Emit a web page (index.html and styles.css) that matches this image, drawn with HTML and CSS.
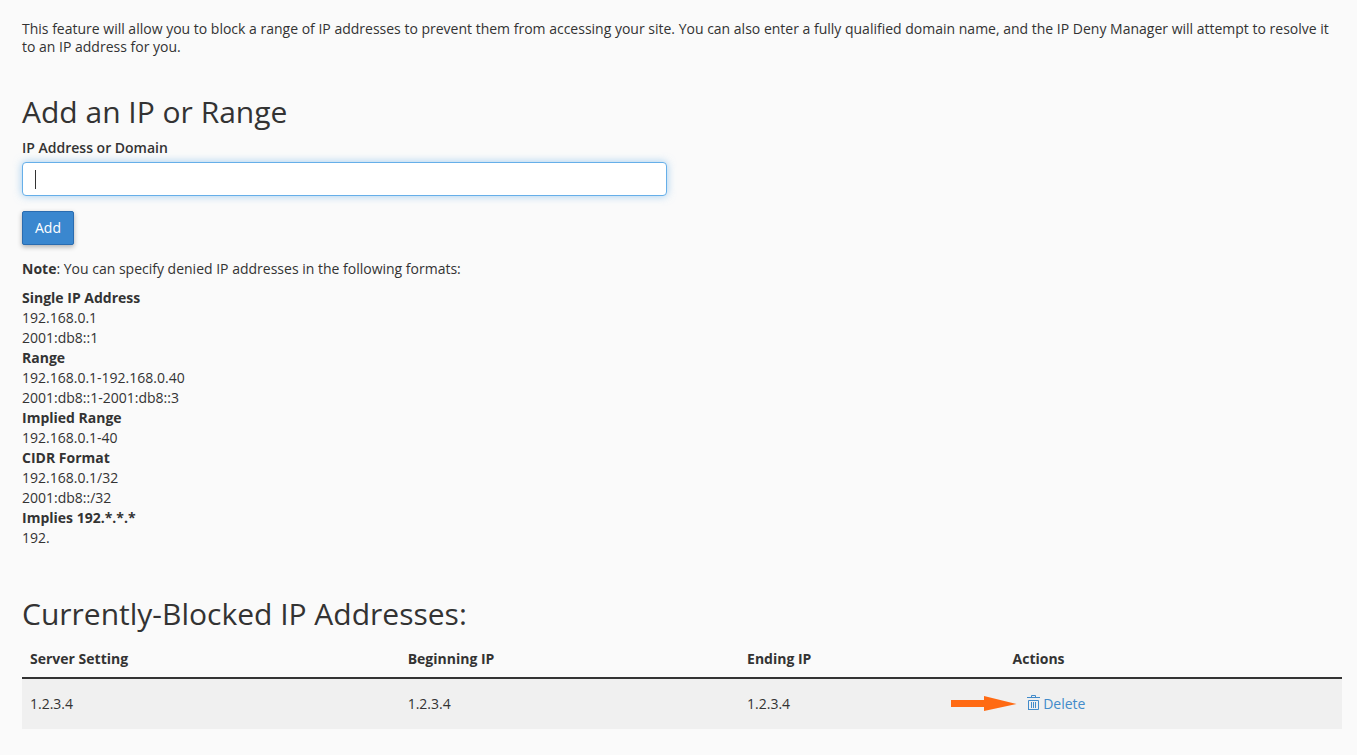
FILE: index.html
```html
<!DOCTYPE html>
<html lang="en">
<head>
    <meta charset="UTF-8">
    <meta name="viewport" content="width=device-width, initial-scale=1.0">
    <title>IP Blocker</title>
    <link rel="stylesheet" href="styles.css">
</head>
<body>

    <p class="description">This feature will allow you to block a range of IP addresses to prevent them from accessing your site. You can also enter a fully qualified domain name, and the IP Deny Manager will attempt to resolve it to an IP address for you.</p>

    <section class="section">
        <h2>Add an IP or Range</h2>
        <form id="addForm">
            <label for="ip">IP Address or Domain</label>
            <input type="text" id="ip" class="ip-input" autofocus>
            <button type="submit" class="add-btn">Add</button>
        </form>
        <p class="note"><strong>Note</strong>: You can specify denied IP addresses in the following formats:</p>
        <dl class="formats">
            <dt>Single IP Address</dt>
            <dd>192.168.0.1</dd>
            <dd>2001:db8::1</dd>
            <dt>Range</dt>
            <dd>192.168.0.1-192.168.0.40</dd>
            <dd>2001:db8::1-2001:db8::3</dd>
            <dt>Implied Range</dt>
            <dd>192.168.0.1-40</dd>
            <dt>CIDR Format</dt>
            <dd>192.168.0.1/32</dd>
            <dd>2001:db8::/32</dd>
            <dt>Implies 192.*.*.*</dt>
            <dd>192.</dd>
        </dl>
    </section>

    <section class="section">
        <h2>Currently-Blocked IP Addresses:</h2>
        <table class="blocked">
            <thead>
                <tr>
                    <th class="col-server">Server Setting</th>
                    <th class="col-begin">Beginning IP</th>
                    <th class="col-end">Ending IP</th>
                    <th class="col-actions">Actions</th>
                </tr>
            </thead>
            <tbody>
                <tr>
                    <td>1.2.3.4</td>
                    <td>1.2.3.4</td>
                    <td>1.2.3.4</td>
                    <td class="actions">
                        <svg class="arrow" width="66" height="16" viewBox="0 0 66 16" aria-hidden="true">
                            <path d="M0 4H33V0L65.500 8L33 15V11H0Z" fill="#ff6a13"/>
                        </svg>
                        <a href="#" class="delete">
                            <svg width="13" height="16" viewBox="0 0 13 16" fill="none" stroke="currentColor" aria-hidden="true">
                                <path d="M0 2.500H13M4.500 2V0.500H8.500V2M1.500 15V5.500H11.500V14.500H1.500M4.500 7V13M6.500 7V13M8.500 7V13"/>
                            </svg>
                            Delete</a>
                    </td>
                </tr>
            </tbody>
        </table>
    </section>

</body>
</html>
```
FILE: styles.css
```css
body {
    font-family: "Open Sans", sans-serif;
    font-size: 14px;
    line-height: 18px;
    color: #333;
    background-color: #fafafa;
    margin: 0;
    padding: 20px 15px 26px 22px;
}
p {
    margin: 0;
}
.section {
    margin-top: 39px;
}
h2 {
    font-size: 30px;
    font-weight: 400;
    line-height: 33px;
    margin: 0 0 11px;
}
label {
    display: block;
    font-weight: 600;
    margin-bottom: 5px;
}
.ip-input {
    display: block;
    box-sizing: border-box;
    width: calc(50% - 15px);
    height: 34px;
    padding: 6px 12px;
    font: inherit;
    background-color: white;
    border: 1px solid #66afe9;
    border-radius: 4px;
    outline: none;
    box-shadow: 0 0 8px rgba(102, 175, 233, 0.6);
}
.ip-input:placeholder-shown,
.ip-input:focus {
    caret-color: transparent;
    background: white linear-gradient(#333, #333) no-repeat 12px center / 1px 19px;
}
.add-btn {
    display: block;
    height: 34px;
    margin: 15px 0;
    padding: 6px 12px;
    font: inherit;
    font-weight: 500;
    color: white;
    background-color: #3a87cf;
    border: 1px solid #2a6cb0;
    border-radius: 2px;
    box-shadow: 0 2px 5px rgba(0, 0, 0, 0.3);
    cursor: pointer;
}
.formats {
    line-height: 20px;
    margin: 10px 0 49px;
}
.formats dt {
    font-weight: 700;
}
.formats dd {
    margin: 0;
}
.blocked {
    width: 100%;
    table-layout: fixed;
    border-collapse: collapse;
}
.blocked th {
    padding: 8px;
    font-weight: 700;
    line-height: 20px;
    text-align: left;
    border-bottom: 2px solid #333;
}
.blocked td {
    padding: 16px 8px;
    background-color: #f0f0f0;
}
.blocked .actions {
    position: relative;
    padding-left: 22px;
}
.col-server {
    width: 27.4%;
}
.col-begin {
    width: 24.5%;
}
.col-end {
    width: 18.9%;
}
.arrow {
    position: absolute;
    top: 17px;
    left: -54px;
}
.delete {
    color: #428bca;
    text-decoration: none;
}
.delete svg {
    vertical-align: -2px;
}
```
